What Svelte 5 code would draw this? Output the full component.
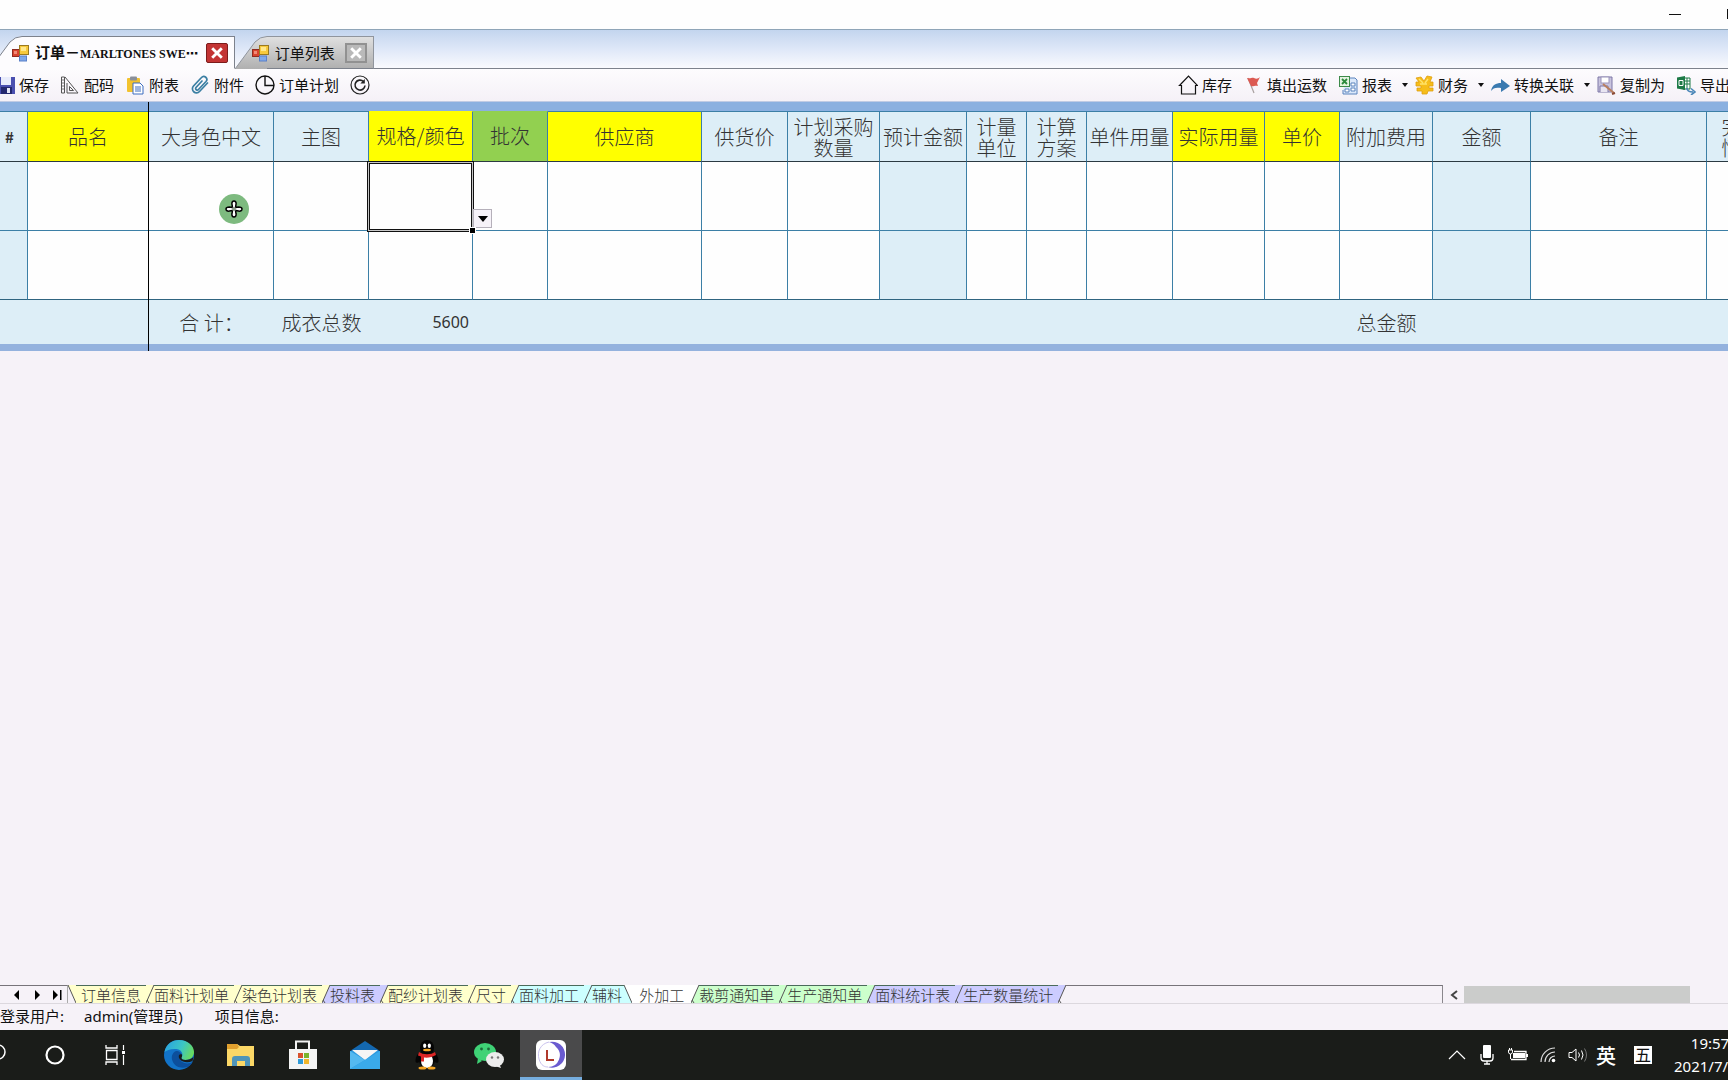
<script lang="ts">
  type Column = { key: string; label: string; width: number; tone?: string; calc?: boolean };
  type Sheet = { name: string; color: string; cls?: string };

  const columns: Column[] = [
    { key: 'index', label: '#', width: 28, tone: 'index', calc: true },
    { key: 'name', label: '品名', width: 121, tone: 'yellow' },
    { key: 'bodyColor', label: '大身色中文', width: 125 },
    { key: 'image', label: '主图', width: 95 },
    { key: 'spec', label: '规格/颜色', width: 104, tone: 'yellow raised' },
    { key: 'batch', label: '批次', width: 75, tone: 'green raised' },
    { key: 'supplier', label: '供应商', width: 154, tone: 'yellow' },
    { key: 'supplyPrice', label: '供货价', width: 86 },
    { key: 'planQty', label: '计划采购\n数量', width: 92 },
    { key: 'estimate', label: '预计金额', width: 87, calc: true },
    { key: 'unit', label: '计量\n单位', width: 60 },
    { key: 'scheme', label: '计算\n方案', width: 60 },
    { key: 'perPiece', label: '单件用量', width: 86 },
    { key: 'actual', label: '实际用量', width: 92, tone: 'yellow' },
    { key: 'price', label: '单价', width: 75, tone: 'yellow' },
    { key: 'extra', label: '附加费用', width: 93 },
    { key: 'amount', label: '金额', width: 98, calc: true },
    { key: 'remark', label: '备注', width: 176 },
    { key: 'done', label: '完成\n情况', width: 70 },
  ];

  const totals: Record<string, string> = {
    bodyColor: '合 计：',
    image: '成衣总数',
    spec: '5600',
    extra: '总金额',
  };

  const yellow = '#ffffcc';
  const violet = '#ccccff';
  const cyan = '#ccffff';
  const green = '#ccffcc';

  const sheets: Sheet[] = [
    { name: '订单信息', color: yellow, cls: 'first' },
    { name: '面料计划单', color: yellow },
    { name: '染色计划表', color: yellow },
    { name: '投料表', color: violet },
    { name: '配纱计划表', color: yellow },
    { name: '尺寸', color: yellow },
    { name: '面料加工', color: cyan },
    { name: '辅料', color: cyan, cls: 'tight' },
    { name: '外加工', color: '#ffffff', cls: 'current' },
    { name: '裁剪通知单', color: green },
    { name: '生产通知单', color: green },
    { name: '面料统计表', color: violet },
    { name: '生产数量统计', color: violet },
  ];

  const leftTools = [
    { icon: 'save', label: '保存' },
    { icon: 'ruler', label: '配码' },
    { icon: 'paste', label: '附表' },
    { icon: 'clip', label: '附件' },
    { icon: 'clock', label: '订单计划' },
    { icon: 'refresh', label: '' },
  ];

  const rightTools = [
    { icon: 'house', label: '库存' },
    { icon: 'flag', label: '填出运数' },
    { icon: 'report', label: '报表', menu: true },
    { icon: 'money', label: '财务', menu: true },
    { icon: 'arrow', label: '转换关联', menu: true },
    { icon: 'copyas', label: '复制为' },
    { icon: 'excel', label: '导出' },
  ];

  const apps = ['search', 'cortana', 'taskview', 'edge', 'folder', 'store', 'mail', 'qq', 'wechat', 'order'];

  let currentSheet = $state('外加工');
</script>

{#snippet formIcon()}
  <svg class="form-icon" viewBox="0 0 18 18" width="18" height="18" aria-hidden="true">
    <rect x="0.5" y="5.5" width="7" height="7" fill="#d8432f" stroke="#8e2c20" />
    <rect x="2" y="7" width="3" height="3" fill="#f08a76" />
    <rect x="7.5" y="1.5" width="9" height="9" fill="#f7c93c" stroke="#9a7a20" />
    <rect x="9" y="3" width="5" height="4" fill="#ffe88c" />
    <rect x="7.5" y="12" width="7" height="5" fill="#7fa8ea" stroke="#5a80c8" />
  </svg>
{/snippet}

{#snippet toolIcon(name: string)}
  <svg viewBox="0 0 20 20" width="20" height="20" aria-hidden="true">
    {#if name === 'save'}
      <path d="M2 2h18a1 1 0 0 1 1 1v16H2z" fill="#4a50b0" />
      <rect x="6" y="2" width="10" height="8" fill="#e9ecfb" />
      <rect x="6" y="12" width="11" height="7" fill="#23286e" />
      <rect x="12" y="13" width="3" height="5" fill="#e3e5f5" />
    {:else if name === 'ruler'}
      <path d="M1.500 2v16h3V2zM5 2l13 16H7V8" fill="none" stroke="#555" />
      <path d="M9.500 11.500l4 4h-4z" fill="none" stroke="#555" />
      <path d="M2 5h2M2 8h2M2 11h2M2 14h2" stroke="#777" />
    {:else if name === 'paste'}
      <rect x="2" y="3" width="13" height="14" rx="1" fill="#f2c22e" />
      <rect x="5" y="1.500" width="7" height="4" rx="1" fill="#8a8f99" />
      <path d="M8 8h7l3 3v8H8z" fill="#fff" stroke="#3d6dbf" />
      <path d="M10 12h6M10 14h6M10 16h6" stroke="#3d6dbf" />
    {:else if name === 'clip'}
      <path
        d="M16.500 8l-8 8.500a4 4 0 0 1-6-5.500l8-8.500a3 3 0 0 1 4.500 4l-7.500 8a1.500 1.500 0 0 1-2.500-2l6-6.500"
        fill="none" stroke="#3b7fa3" stroke-width="1.700" stroke-linecap="round" transform="translate(1 0)"
      />
    {:else if name === 'clock'}
      <circle cx="10" cy="10" r="9" fill="none" stroke="#111" stroke-width="1.400" />
      <path d="M10 1v9.500h9" fill="none" stroke="#111" stroke-width="1.400" />
    {:else if name === 'refresh'}
      <circle cx="10" cy="10" r="9" fill="none" stroke="#222" stroke-width="1.200" />
      <path d="M13.500 6.500a5 5 0 1 0 1.500 4" fill="none" stroke="#222" stroke-width="1.600" />
      <path d="M14.800 4v4.500h-4.500z" fill="#222" />
    {:else if name === 'house'}
      <path d="M1.500 10.500L10.500 1l9 9.500h-2V19h-14v-8.500z" fill="none" stroke="#111" stroke-width="1.200" />
    {:else if name === 'flag'}
      <path d="M5 3l6 15" stroke="#a8a0a0" stroke-width="1.200" />
      <path d="M4 3c4 1 5-1 7 0s4 1 6-1l-3 6 1 3c-3-1-5 1-7 0z" fill="#dc5a52" />
    {:else if name === 'report'}
      <path d="M9 3h8l2 2v14H5v-4" fill="#dbe8fa" stroke="#5b83bd" />
      <path d="M13 8h4v3h-4zM13 13h4v3h-4zM7 14h4v3H7z" fill="#fff" stroke="#5b83bd" />
      <rect x="1.500" y="1.500" width="10" height="10" fill="#e4f3e1" stroke="#3d8a4a" />
      <path d="M4 4l5 5M9 4l-5 5" stroke="#2c8a3c" stroke-width="1.800" />
    {:else if name === 'money'}
      <path d="M2 3l5-1 3 4 3-5 5 1-2 5h3v4h-4v2h4v3h-5l-1 3H8v-3H3v-3h4v-2H2V7h3z" fill="#f6bd1a" stroke="#e0a010" stroke-width="0.800" />
      <path d="M5 4l4 4M14 4l-3 4M6 9h7" stroke="#ffe36b" stroke-width="1.400" />
    {:else if name === 'arrow'}
      <path d="M1 16c1-6 5-8 10-8V4l9 7-9 6v-4c-5-1-8 0-10 3z" fill="#3a7ab0" />
    {:else if name === 'copyas'}
      <path d="M2 2h14v15H2z" fill="#c9c4de" stroke="#7d76a6" />
      <rect x="5" y="2" width="8" height="6" fill="#fff" stroke="#9a94ba" />
      <path d="M4 17V11h8v6" fill="#e8e5f2" stroke="#7d76a6" />
      <path d="M7 9l11 9" stroke="#b97f5e" stroke-width="2" />
      <path d="M16 19l3-1" stroke="#8a4a35" stroke-width="2" />
    {:else}
      <path d="M7 3h7v11H7z" fill="#fff" stroke="#1d7a46" />
      <path d="M8 6h6M8 9h6M11 3v11" stroke="#1d7a46" />
      <path d="M1 2.500l8-1.500v14l-8-1.500z" fill="#1d7a46" />
      <path d="M3 5.500h4v5H3z" fill="none" stroke="#fff" />
      <path d="M11 13c0 3 2 4 6 4M15 13.500l4 3.500-4 3" fill="none" stroke="#4a86b8" stroke-width="1.600" />
    {/if}
  </svg>
{/snippet}

{#snippet appIcon(name: string)}
  <svg viewBox="0 0 30 30" width="30" height="30" aria-hidden="true">
    {#if name === 'search'}
      <circle cx="20" cy="12" r="7" fill="none" stroke="#fff" stroke-width="1.500" />
    {:else if name === 'cortana'}
      <circle cx="15" cy="15" r="8.500" fill="none" stroke="#fff" stroke-width="2.200" />
    {:else if name === 'taskview'}
      <path d="M4 5v3h11V5M4 25v-3h11v3M4.500 10.500h10.500v9H4.500z" fill="none" stroke="#fff" stroke-width="1.300" />
      <path d="M21.500 5v5M21.500 15v10" stroke="#fff" stroke-width="1.200" />
      <rect x="20" y="11" width="3" height="3" fill="#fff" />
    {:else if name === 'edge'}
      <defs>
        <linearGradient id="edge-top" x1="0" y1="0.300" x2="1" y2="0.600">
          <stop offset="0" stop-color="#2aa4e0" />
          <stop offset="0.550" stop-color="#3cc6c4" />
          <stop offset="1" stop-color="#6bdc5a" />
        </linearGradient>
      </defs>
      <circle cx="15" cy="15" r="15" fill="#1273c8" />
      <path d="M0.500 12C2 4 8 0 15 0c9 0 15 6 15 12 0 5-4 8-8.500 8-3 0-4.500-1.500-4-2.500 2-2 1-8-5-8.500C7 8.500 2.500 10 0.500 12z" fill="url(#edge-top)" />
      <path d="M12 11c-4 2-5 6-3.500 10 2 5.500 8 8 15 6 3-1.500 5-4 5-5-5 3-12 1-13-4-.500-3 2-4 2-4-1-2-3-3.500-5.500-3z" fill="#0c4f9c" />
      <path d="M17.500 14c-3 0-3.500 3-1.500 5.500 3 3 8 3.500 12.500 1.500l1-4c-2 2-5 3-8 3-3 0-4.500-1.500-4-2.500.8-1 .8-2.500 0-3.500z" fill="#1a1c19" />
    {:else if name === 'folder'}
      <path d="M1 4h10l3 2h14v20H1z" fill="#fbd766" />
      <path d="M1 4h10l2 3-2 2H1z" fill="#e0a02e" />
      <path d="M6 26V19a3 3 0 0 1 3-3h12a3 3 0 0 1 3 3v7h-5v-5h-8v5z" fill="#4f94b8" />
    {:else if name === 'store'}
      <path d="M8 9V1.500h13V9" fill="none" stroke="#f2f2f2" stroke-width="2" />
      <path d="M1 9h28v20H1z" fill="#f4f4f4" />
      <rect x="10" y="13" width="5" height="5" fill="#d8512c" />
      <rect x="16" y="13" width="5" height="5" fill="#7ab42d" />
      <rect x="10" y="19" width="5" height="5" fill="#2f9bd8" />
      <rect x="16" y="19" width="5" height="5" fill="#f2b62a" />
    {:else if name === 'mail'}
      <path d="M0 11L15 1l15 10z" fill="#1468b0" />
      <path d="M0 11h30v18H0z" fill="#2c9be0" />
      <path d="M2 10h26L15 20z" fill="#f5f5f5" />
      <path d="M0 11l15 9-15 9z" fill="#54b9f0" />
      <path d="M30 11L0 29h30z" fill="#3aaaea" />
    {:else if name === 'qq'}
      <ellipse cx="6.500" cy="18" rx="2.500" ry="5" fill="#050505" transform="rotate(20 6.500 18)" />
      <ellipse cx="23.500" cy="18" rx="2.500" ry="5" fill="#050505" transform="rotate(-20 23.500 18)" />
      <ellipse cx="15" cy="20" rx="8" ry="8.500" fill="#050505" />
      <ellipse cx="15" cy="21" rx="6" ry="7" fill="#fff" />
      <ellipse cx="15" cy="8" rx="7" ry="8" fill="#050505" />
      <ellipse cx="12.700" cy="5.800" rx="1.600" ry="2.200" fill="#fff" />
      <ellipse cx="17.300" cy="5.800" rx="1.600" ry="2.200" fill="#fff" />
      <ellipse cx="15" cy="10" rx="4" ry="1.300" fill="#f5a524" />
      <path d="M7 12c4 3 12 3 16 0l1 3c-3 2-8 3-12 2.500v4H9v-5l-3-1z" fill="#dc2626" />
      <ellipse cx="10.500" cy="28" rx="4" ry="1.500" fill="#f5a524" />
      <ellipse cx="19.500" cy="28" rx="4" ry="1.500" fill="#f5a524" />
    {:else if name === 'wechat'}
      <path d="M4 18l-1 6 5-3z" fill="#3fd276" />
      <ellipse cx="11" cy="12" rx="11" ry="9" fill="#3fd276" />
      <circle cx="7.500" cy="9" r="1.400" fill="#1d6b3b" />
      <circle cx="14.500" cy="9" r="1.400" fill="#1d6b3b" />
      <path d="M25 23l2 5-6-2z" fill="#e9e9e9" />
      <ellipse cx="21" cy="19.500" rx="9" ry="7.500" fill="#ececec" />
      <circle cx="18" cy="17.500" r="1.200" fill="#777" />
      <circle cx="24" cy="17.500" r="1.200" fill="#777" />
    {:else}
      <rect width="30" height="30" rx="6" fill="#fff" />
      <path d="M13 2a13 13 0 1 1-1 25 11.500 11.500 0 0 0 8-20c-2-3-4-4-7-5z" fill="#6a5bd0" />
      <path d="M13 2C4 4 1 12 3 19s6 8 9 8" fill="none" stroke="#c9c2ee" />
      <path d="M11 10v10h7" fill="none" stroke="#b0392b" stroke-width="2" />
    {/if}
  </svg>
{/snippet}

{#snippet toolButton(tool: { icon: string; label: string; menu?: boolean })}
  <button class="tool" aria-label={tool.label || '刷新'}>
    {@render toolIcon(tool.icon)}
    {#if tool.label}<span>{tool.label}</span>{/if}
    {#if tool.menu}
      <svg class="caret" viewBox="0 0 6 4" width="6" height="4" aria-hidden="true"><path d="M0 0h6L3 4z" fill="#111" /></svg>
    {/if}
  </button>
{/snippet}

<div class="app">
  <header class="titlebar">
    <button class="win" aria-label="最小化"><svg width="12" height="12"><path d="M0 6.500h12" stroke="#111" /></svg></button>
    <button class="win" aria-label="最大化"><svg width="12" height="12"><rect x="0.500" y="1.500" width="10" height="9" fill="none" stroke="#111" /></svg></button>
  </header>

  <nav class="doc-tabs">
    <div class="doc-tab active">
      <svg class="slope" width="32" height="33" viewBox="0 0 32 33" aria-hidden="true">
        <path d="M0 33L20 6Q25 0.500 32 0.500V33z" fill="#fdfcfe" />
        <path d="M0 33L20 6Q25 0.500 32 0.500" fill="none" stroke="#7d828c" />
      </svg>
      <div class="doc-body">
        {@render formIcon()}
        <span class="doc-title">订单－<span class="latin">MARLTONES SWE</span><span class="dots">⋯</span></span>
        <button class="close red" aria-label="关闭">
          <svg viewBox="0 0 10 10" width="12" height="12"><path d="M1 1l8 8M9 1l-8 8" stroke="#fff" stroke-width="2.400" /></svg>
        </button>
      </div>
    </div>
    <div class="doc-tab">
      <svg class="slope" width="32" height="33" viewBox="0 0 32 33" aria-hidden="true">
        <defs>
          <linearGradient id="tab-grey" x1="0" y1="0" x2="0" y2="1">
            <stop offset="0" stop-color="#e0e0e0" />
            <stop offset="1" stop-color="#b0b0b0" />
          </linearGradient>
        </defs>
        <path d="M0 33L20 6Q25 0.500 32 0.500V33z" fill="url(#tab-grey)" />
        <path d="M0 33L20 6Q25 0.500 32 0.500" fill="none" stroke="#90959d" />
      </svg>
      <div class="doc-body">
        {@render formIcon()}
        <span class="doc-title">订单列表</span>
        <button class="close" aria-label="关闭">
          <svg viewBox="0 0 10 10" width="12" height="12"><path d="M1 1l8 8M9 1l-8 8" stroke="#fff" stroke-width="2.400" /></svg>
        </button>
      </div>
    </div>
    <div class="doc-rest"></div>
  </nav>

  <div class="toolbar">
    <div class="tools">
      {#each leftTools as tool}
        {@render toolButton(tool)}
      {/each}
    </div>
    <div class="tools right">
      {#each rightTools as tool}
        {@render toolButton(tool)}
      {/each}
    </div>
  </div>

  <main>
    <div class="grid">
      <table>
        <colgroup>
          {#each columns as col}
            <col style="width: {col.width}px" />
          {/each}
        </colgroup>
        <thead>
          <tr>
            {#each columns as col}
              <th class={col.tone}>{col.label}</th>
            {/each}
          </tr>
        </thead>
        <tbody>
          {#each [0, 1] as row}
            <tr>
              {#each columns as col}
                <td class:calc={col.calc}>
                  {#if row === 0 && col.key === 'spec'}
                    <div class="selection"></div>
                    <div class="handle"></div>
                    <button class="drop" aria-label="选择规格">
                      <svg viewBox="0 0 10 6" width="10" height="6"><path d="M0 0h10L5 6z" fill="#000" /></svg>
                    </button>
                  {/if}
                  {#if row === 0 && col.key === 'bodyColor'}
                    <div class="pointer">
                      <svg viewBox="0 0 18 18" width="18" height="18">
                        <path
                          d="M9 1c1.500 0 2.500 1.500 2 3.500l-.500 3 3-.500c2 0 3.500.500 3.500 2s-1.500 2.500-3.500 2l-3-.500.500 3c.500 2-.500 3.500-2 3.500S6.500 15.500 7 13.500l.500-3-3 .500C2.500 11.500 1 10.500 1 9s1.500-2 3.500-2l3 .500L7 4.500C6.500 2.500 7.500 1 9 1z"
                          fill="#fff" stroke="#000" stroke-width="1.500"
                        />
                        <circle cx="9" cy="9" r="2" fill="#8a9a8a" />
                      </svg>
                    </div>
                  {/if}
                </td>
              {/each}
            </tr>
          {/each}
        </tbody>
        <tfoot>
          <tr>
            {#each columns as col}
              <td class:number={col.key === 'spec'}>{totals[col.key] ?? ''}</td>
            {/each}
          </tr>
        </tfoot>
      </table>
      <div class="freeze"></div>
    </div>
  </main>

  <nav class="sheets">
    <div class="sheet-nav">
      <button aria-label="上一个"><svg width="8" height="12"><path d="M6 1v10L1 6z" /></svg></button>
      <button aria-label="下一个"><svg width="8" height="12"><path d="M2 1v10l5-5z" /></svg></button>
      <button aria-label="最后一个"><svg width="9" height="12"><path d="M0 1v10l5-5zM7 1h1.500v10H7z" /></svg></button>
    </div>
    <svg class="edge" width="8" height="18" aria-hidden="true">
      <path d="M0 0h8v18z" fill={yellow} />
      <path d="M0 0l8 18" stroke="#555" />
    </svg>
    {#each sheets as sheet, i}
      {@const next = sheets[i + 1]?.color ?? '#f6f2f8'}
      <button
        class="sheet {sheet.cls ?? ''}"
        class:selected={sheet.name === currentSheet}
        style="background: {sheet.color}"
        onclick={() => (currentSheet = sheet.name)}
      >{sheet.name}</button>
      {#if sheet.cls === 'tight'}
        <svg class="edge" width="8" height="18" aria-hidden="true">
          <path d="M0 0h8v18z" fill={next} />
          <path d="M0 0v18h8z" fill={sheet.color} />
          <path d="M0 0l8 18" stroke="#555" />
        </svg>
      {:else}
        <svg class="edge" width="8" height="18" aria-hidden="true">
          <path d="M8 0v18H0z" fill={next} />
          <path d="M0 0h8L0 18z" fill={sheet.color} />
          <path d="M0 18L8 0M1 15l2 3" stroke="#555" fill="none" />
        </svg>
      {/if}
    {/each}
    <div class="sheet-rest"></div>
    <div class="scroll">
      <button aria-label="向左滚动"><svg width="8" height="10"><path d="M7 1L2 5l5 4" fill="none" stroke="#444" stroke-width="2" /></svg></button>
      <div class="thumb"></div>
    </div>
  </nav>

  <footer class="status">
    <span>登录用户:</span>
    <span>admin(管理员)</span>
    <span>项目信息:</span>
  </footer>

  <div class="taskbar">
    <div class="apps">
      {#each apps as app}
        <button class="app-button" class:running={app === 'order'} aria-label={app}>{@render appIcon(app)}</button>
      {/each}
    </div>
    <div class="tray">
      <svg width="18" height="18" viewBox="0 0 18 18"><path d="M1 13l8-8 8 8" fill="none" stroke="#fff" stroke-width="1.200" /></svg>
      <svg width="18" height="20" viewBox="0 0 18 20">
        <rect x="5" y="0" width="8" height="13" rx="1" fill="#fff" />
        <path d="M3 9v4q0 3 3 3h6q3 0 3-3V9M9 16v3M6 19h6" fill="none" stroke="#fff" stroke-width="1.300" />
      </svg>
      <svg width="20" height="16" viewBox="0 0 20 16">
        <path d="M0.500 3h4v2q0 2-2 2t-2-2zM1.500 1v2M3.500 1v2M2.500 7v5" fill="none" stroke="#fff" />
        <path d="M6 4.500h12v8H3" fill="none" stroke="#fff" stroke-width="1.300" />
        <rect x="5" y="6" width="12" height="5" fill="#fff" />
        <rect x="18" y="7" width="2" height="3" fill="#fff" />
      </svg>
      <svg width="16" height="16" viewBox="0 0 16 16">
        <path d="M1 15A14 14 0 0 1 15 1M5 15A10 10 0 0 1 15 5M9 15a6 6 0 0 1 6-6" fill="none" stroke="#ddd" stroke-width="1.200" />
        <circle cx="13.500" cy="13.500" r="1.800" fill="#fff" />
      </svg>
      <svg width="20" height="16" viewBox="0 0 20 16">
        <path d="M1 5.500h3L8 2v12l-4-3.500H1z" fill="none" stroke="#fff" />
        <path d="M10.500 5.500q2 2.500 0 5M13.500 3.500q3 4.500 0 9" fill="none" stroke="#fff" />
        <path d="M16.500 1.500q4 6.500 0 13" fill="none" stroke="#777" />
      </svg>
      <span class="ime">英</span>
      <span class="wubi">五</span>
      <div class="clock">
        <span>19:57</span>
        <span class="date">2021/7/</span>
      </div>
    </div>
  </div>
</div>

<style>
  :global(body) {
    margin: 0;
    background: #f6f2f8;
  }

  .app {
    display: flex;
    flex-direction: column;
    min-height: 100vh;
    overflow: hidden;
    background: #f6f2f8;
    color: #111;
    font-family: "Noto Sans", "Noto Sans CJK SC", sans-serif;
    font-size: 15px;
  }

  button {
    display: flex;
    align-items: center;
    padding: 0;
    border: 0;
    background: none;
    color: inherit;
    font: inherit;
  }

  svg {
    display: block;
    flex: none;
  }

  .titlebar {
    display: flex;
    justify-content: flex-end;
    gap: 46px;
    height: 29px;
    margin-right: -11px;
    background: #fefefe;
  }

  .win {
    height: 27px;
  }

  .doc-tabs {
    display: flex;
    align-items: stretch;
    height: 33px;
    padding-top: 6px;
    border-top: 1px solid #8fa5b8;
    background: linear-gradient(#c3d5ee, #dfe8f8 50%, #fbfbfe);
  }

  .doc-tab {
    display: flex;
  }

  .doc-tab.active {
    margin-left: -10px;
  }

  .doc-body {
    display: flex;
    align-items: center;
    box-sizing: border-box;
    padding-right: 6px;
    border-top: 1px solid #90959d;
    border-right: 1px solid #90959d;
    border-bottom: 1px solid #7d828c;
    background: linear-gradient(#e0e0e0, #b0b0b0);
  }

  .active .doc-body {
    border-color: #7d828c;
    border-bottom-color: #fdfcfe;
    background: #fdfcfe;
  }

  .form-icon {
    margin-left: -15px;
    margin-right: 5px;
  }

  .active .form-icon {
    margin-left: -10px;
  }

  .doc-title {
    margin-right: 10px;
    line-height: 20px;
    white-space: nowrap;
  }

  .active .doc-title {
    margin-right: 7px;
    font-weight: 700;
  }

  .active .doc-title .latin {
    font-family: "Liberation Serif", serif;
    font-size: 12px;
  }

  .dots {
    font-family: "DejaVu Sans", sans-serif;
    font-size: 13px;
  }

  .close {
    justify-content: center;
    box-sizing: border-box;
    width: 22px;
    height: 20px;
    border: 2px solid #919191;
    background: #b9b9b9;
  }

  .close.red {
    border: 1px solid #7c1c1c;
    border-radius: 2px;
    background: #c33434;
  }

  .doc-rest {
    flex: 1;
    border-bottom: 1px solid #7d828c;
  }

  .toolbar {
    display: flex;
    justify-content: space-between;
    box-sizing: border-box;
    height: 33px;
    border-bottom: 1px solid #c0cbe4;
    background: linear-gradient(#fdfcfe, #f5f1f7);
  }

  .tools {
    display: flex;
    align-items: center;
    gap: 11px;
    margin-left: -5px;
  }

  .tools.right {
    margin-right: -2px;
  }

  .tool {
    gap: 4px;
    line-height: 20px;
    white-space: nowrap;
  }

  .caret {
    margin-left: 6px;
    margin-right: -5px;
  }

  main {
    flex: 1;
  }

  .grid {
    position: relative;
    border-top: 9px solid #8bb0e0;
    border-bottom: 7px solid #94b2de;
    background: #ddeef7;
  }

  table {
    width: 100%;
    table-layout: fixed;
    border-collapse: separate;
    border-spacing: 0;
    color: #333;
    font-family: "Noto Sans CJK SC", sans-serif;
    font-size: 20px;
    font-weight: 300;
    line-height: 21px;
  }

  th,
  td {
    position: relative;
    box-sizing: border-box;
    padding: 0;
    border-right: 1px solid #3c7fa6;
    border-bottom: 1px solid #3c7fa6;
    text-align: center;
    white-space: pre;
  }

  th {
    height: 51px;
    border-top: 1px solid #3c7fa6;
    border-bottom-color: #2b3a42;
    background: #ddeef7;
    font-weight: 300;
  }

  th.index {
    padding-right: 8px;
    font-size: 15px;
    font-weight: 700;
  }

  th.yellow {
    background: #ffff00;
  }

  th.green {
    background: #92d050;
  }

  th.raised {
    padding-bottom: 2px;
    border-top-color: transparent;
  }

  tbody td {
    height: 69px;
    background: #fefefe;
  }

  tbody tr:last-child td {
    border-bottom-color: #2f6480;
  }

  tbody td.calc {
    background: #ddeef7;
  }

  tfoot td {
    height: 44px;
    border: 0;
  }

  tfoot td.number {
    padding-right: 4px;
    font-family: "Noto Sans", sans-serif;
    font-size: 16px;
    font-weight: 400;
    text-align: right;
  }

  .freeze {
    position: absolute;
    top: -9px;
    bottom: -7px;
    left: 148px;
    width: 1px;
    background: #000;
  }

  .selection {
    position: absolute;
    inset: -1px -2px -2px -2px;
    z-index: 1;
    border: 1px solid #111;
    box-shadow: inset 0 0 0 1px #c8c8c8, inset 0 0 0 2px #111;
  }

  .handle {
    position: absolute;
    right: -4px;
    bottom: -4px;
    z-index: 2;
    width: 5px;
    height: 5px;
    border: 1px solid #fff;
    background: #000;
  }

  .drop {
    position: absolute;
    right: -20px;
    bottom: 2px;
    z-index: 1;
    justify-content: center;
    width: 19px;
    height: 19px;
    border: 1px solid #b5b0ba;
    background: #f6f2f8;
  }

  .pointer {
    position: absolute;
    top: 32px;
    left: 70px;
    display: flex;
    align-items: center;
    justify-content: center;
    width: 30px;
    height: 30px;
    border-radius: 50%;
    background: #7dba7f;
  }

  .sheets {
    display: flex;
    height: 18px;
    border-bottom: 1px solid #dcd8de;
    color: #333;
    font-family: "Noto Sans CJK SC", sans-serif;
    font-weight: 300;
  }

  .sheet-nav {
    display: flex;
    justify-content: flex-end;
    gap: 12px;
    box-sizing: border-box;
    width: 68px;
    padding-right: 5px;
    border-top: 1px solid #77747a;
    border-right: 1px solid #aaa;
  }

  .sheet {
    padding-right: 5px;
    border-top: 1px solid #4b6b5b;
    line-height: 16px;
    white-space: nowrap;
  }

  .sheet.first {
    padding-left: 5px;
  }

  .sheet.tight {
    padding-right: 2px;
  }

  .sheet.current {
    padding: 0 7px;
  }

  .sheet.selected {
    border-top-color: #fff;
  }

  .sheet-rest {
    flex: 1;
    border-top: 1px solid #77747a;
    border-right: 1px solid #8a878d;
  }

  .scroll {
    display: flex;
    width: 285px;
    padding-top: 1px;
  }

  .scroll button {
    justify-content: center;
    width: 21px;
  }

  .thumb {
    width: 226px;
    background: #cbcccb;
  }

  .status {
    display: flex;
    gap: 32px;
    height: 26px;
    line-height: 24px;
  }

  .status span:first-child {
    margin-right: -12px;
  }

  .taskbar {
    display: flex;
    justify-content: space-between;
    height: 50px;
    background: #1a1c19;
    color: #fff;
  }

  .apps {
    display: flex;
    margin-left: -38px;
  }

  .app-button {
    justify-content: center;
    box-sizing: border-box;
    width: 62px;
    border-top: 3px solid transparent;
    border-bottom: 3px solid transparent;
  }

  .app-button.running {
    border-top-color: #4a4a4b;
    border-bottom-color: #76aee0;
    background: #4a4a4b;
  }

  .tray {
    display: flex;
    align-items: center;
    gap: 12px;
    margin-right: -18px;
  }

  .ime {
    margin-left: -4px;
    font-size: 20px;
    font-weight: 500;
  }

  .wubi {
    width: 18px;
    height: 18px;
    margin: 0 10px 0 6px;
    background: #fff;
    color: #111;
    font-size: 16px;
    line-height: 18px;
    text-align: center;
  }

  .clock {
    display: flex;
    flex-direction: column;
    align-items: center;
    line-height: 23px;
  }

  .date {
    width: 72px;
  }
</style>
